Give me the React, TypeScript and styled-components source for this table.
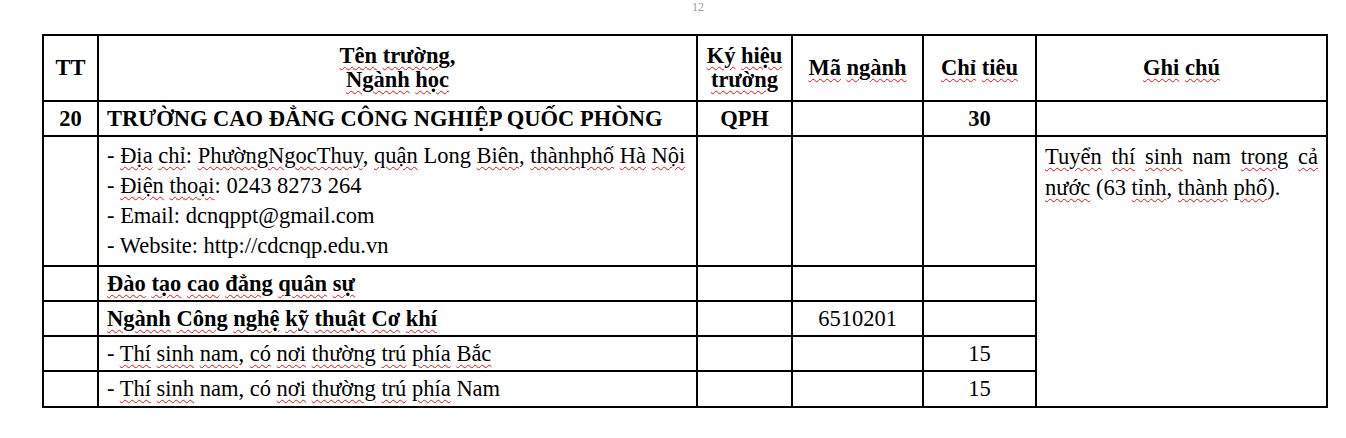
import React from 'react'
import styled, { createGlobalStyle } from 'styled-components'

const serif = '"Liberation Serif", "Times New Roman", serif'

const GlobalStyle = createGlobalStyle`
  body {
    margin: 0;
    background: #fff;
    font-family: ${serif};
    color: #000;
  }
`

const PageHead = styled.div`
  height: 34px;
`

const PageNo = styled.div`
  padding-left: 692px;
  font-family: ${serif};
  font-size: 12px;
  line-height: 14px;
  color: #9a9a9a;
`

const TableWrap = styled.div`
  position: relative;
  width: max-content;
  margin-left: 42px;
`

const Grid = styled.table`
  border-collapse: collapse;
  table-layout: fixed;
  width: 1284px;
  font-family: ${serif};
  font-size: 22.5px;
  color: #000;
`

const Row = styled.tr<{ $h: number }>`
  height: ${(p) => p.$h}px;
`

const Th = styled.th`
  border: 2px solid #000;
  padding: 0 6px;
  font-weight: 700;
  line-height: 24px;
  text-align: center;
  vertical-align: middle;
`

const Td = styled.td<{ $align?: 'left' | 'center'; $bold?: boolean; $top?: boolean }>`
  border: 2px solid #000;
  padding: ${(p) => (p.$top ? '4px 8px 0' : '0 8px')};
  font-weight: ${(p) => (p.$bold ? 700 : 400)};
  line-height: 30px;
  text-align: ${(p) => p.$align || 'left'};
  vertical-align: ${(p) => (p.$top ? 'top' : 'middle')};
`

const Note = styled.div`
  text-align: justify;
  line-height: 31px;
`

const Line = styled.div`
  white-space: nowrap;
`

const Squiggle = styled.span`
  text-decoration-line: underline;
  text-decoration-style: wavy;
  text-decoration-color: #e01010;
  text-decoration-thickness: 1.4px;
  text-underline-offset: 3px;
`

const Handle = styled.span`
  position: absolute;
  right: -9px;
  bottom: -10px;
  width: 6px;
  height: 6px;
  border: 1px solid #8a8a8a;
  background: #f2f2f2;
`

// words starting with ~ get the spell-check squiggle (trailing punctuation stays plain)
const Marked: React.FC<{ text: string }> = ({ text }) => (
  <>
    {text.split(' ').map((tok, i) => {
      const sep = i > 0 ? ' ' : ''
      if (!tok.startsWith('~')) {
        return (
          <React.Fragment key={i}>
            {sep}
            {tok}
          </React.Fragment>
        )
      }
      const m = tok.slice(1).match(/^(.*?)([,.:;)]*)$/)
      const word = m ? m[1] : tok.slice(1)
      const tail = m ? m[2] : ''
      return (
        <React.Fragment key={i}>
          {sep}
          <Squiggle>{word}</Squiggle>
          {tail}
        </React.Fragment>
      )
    })}
  </>
)

const contacts = [
  '- ~Địa ~chỉ: ~PhườngNgocThuy, ~quận Long ~Biên, ~thànhphố ~Hà ~Nội',
  '- ~Điện ~thoại: 0243 8273 264',
  '- Email: dcnqppt@gmail.com',
  '- Website: http://cdcnqp.edu.vn',
]

const programmes = [
  { name: '~Đào ~tạo ~cao ~đẳng ~quân ~sự', bold: true, code: '', quota: '' },
  { name: '~Ngành ~Công ~nghệ ~kỹ ~thuật ~Cơ ~khí', bold: true, code: '6510201', quota: '' },
  { name: '- ~Thí ~sinh ~nam, ~có ~nơi ~thường ~trú ~phía ~Bắc', bold: false, code: '', quota: '15' },
  { name: '- ~Thí ~sinh nam, có ~nơi ~thường ~trú ~phía Nam', bold: false, code: '', quota: '15' },
]

const App: React.FC = () => {
  return (
    <>
      <GlobalStyle />
      <PageHead>
        <PageNo>12</PageNo>
      </PageHead>

      <TableWrap>
        <Grid>
          <colgroup>
            <col style={{ width: 55 }} />
            <col style={{ width: 599 }} />
            <col style={{ width: 95 }} />
            <col style={{ width: 131 }} />
            <col style={{ width: 113 }} />
            <col style={{ width: 291 }} />
          </colgroup>
          <thead>
            <Row $h={66}>
              <Th>TT</Th>
              <Th>
                <Marked text="~Tên ~trường," />
                <br />
                <Marked text="~Ngành ~học" />
              </Th>
              <Th>
                <Marked text="~Ký ~hiệu" />
                <br />
                <Marked text="~trường" />
              </Th>
              <Th>
                <Marked text="~Mã ~ngành" />
              </Th>
              <Th>
                <Marked text="~Chỉ ~tiêu" />
              </Th>
              <Th>
                <Marked text="~Ghi ~chú" />
              </Th>
            </Row>
          </thead>
          <tbody>
            {/* school row */}
            <Row $h={35}>
              <Td $align="center" $bold>
                20
              </Td>
              <Td $bold>TRƯỜNG CAO ĐẲNG CÔNG NGHIỆP QUỐC PHÒNG</Td>
              <Td $align="center" $bold>
                QPH
              </Td>
              <Td />
              <Td $align="center" $bold>
                30
              </Td>
              <Td />
            </Row>

            {/* contact details + note spanning the rest */}
            <Row $h={130}>
              <Td />
              <Td $top>
                {contacts.map((c) => (
                  <Line key={c}>
                    <Marked text={c} />
                  </Line>
                ))}
              </Td>
              <Td />
              <Td />
              <Td />
              <Td $top rowSpan={5}>
                <Note>
                  <Marked text="~Tuyển ~thí ~sinh nam ~trong ~cả ~nước (63 ~tỉnh, ~thành ~phố)." />
                </Note>
              </Td>
            </Row>

            {programmes.map((p, i) => (
              <Row key={i} $h={i === programmes.length - 1 ? 36 : 35}>
                <Td />
                <Td $bold={p.bold}>
                  <Marked text={p.name} />
                </Td>
                <Td />
                <Td $align="center">{p.code}</Td>
                <Td $align="center">{p.quota}</Td>
              </Row>
            ))}
          </tbody>
        </Grid>
        <Handle />
      </TableWrap>
    </>
  )
}

export default App
